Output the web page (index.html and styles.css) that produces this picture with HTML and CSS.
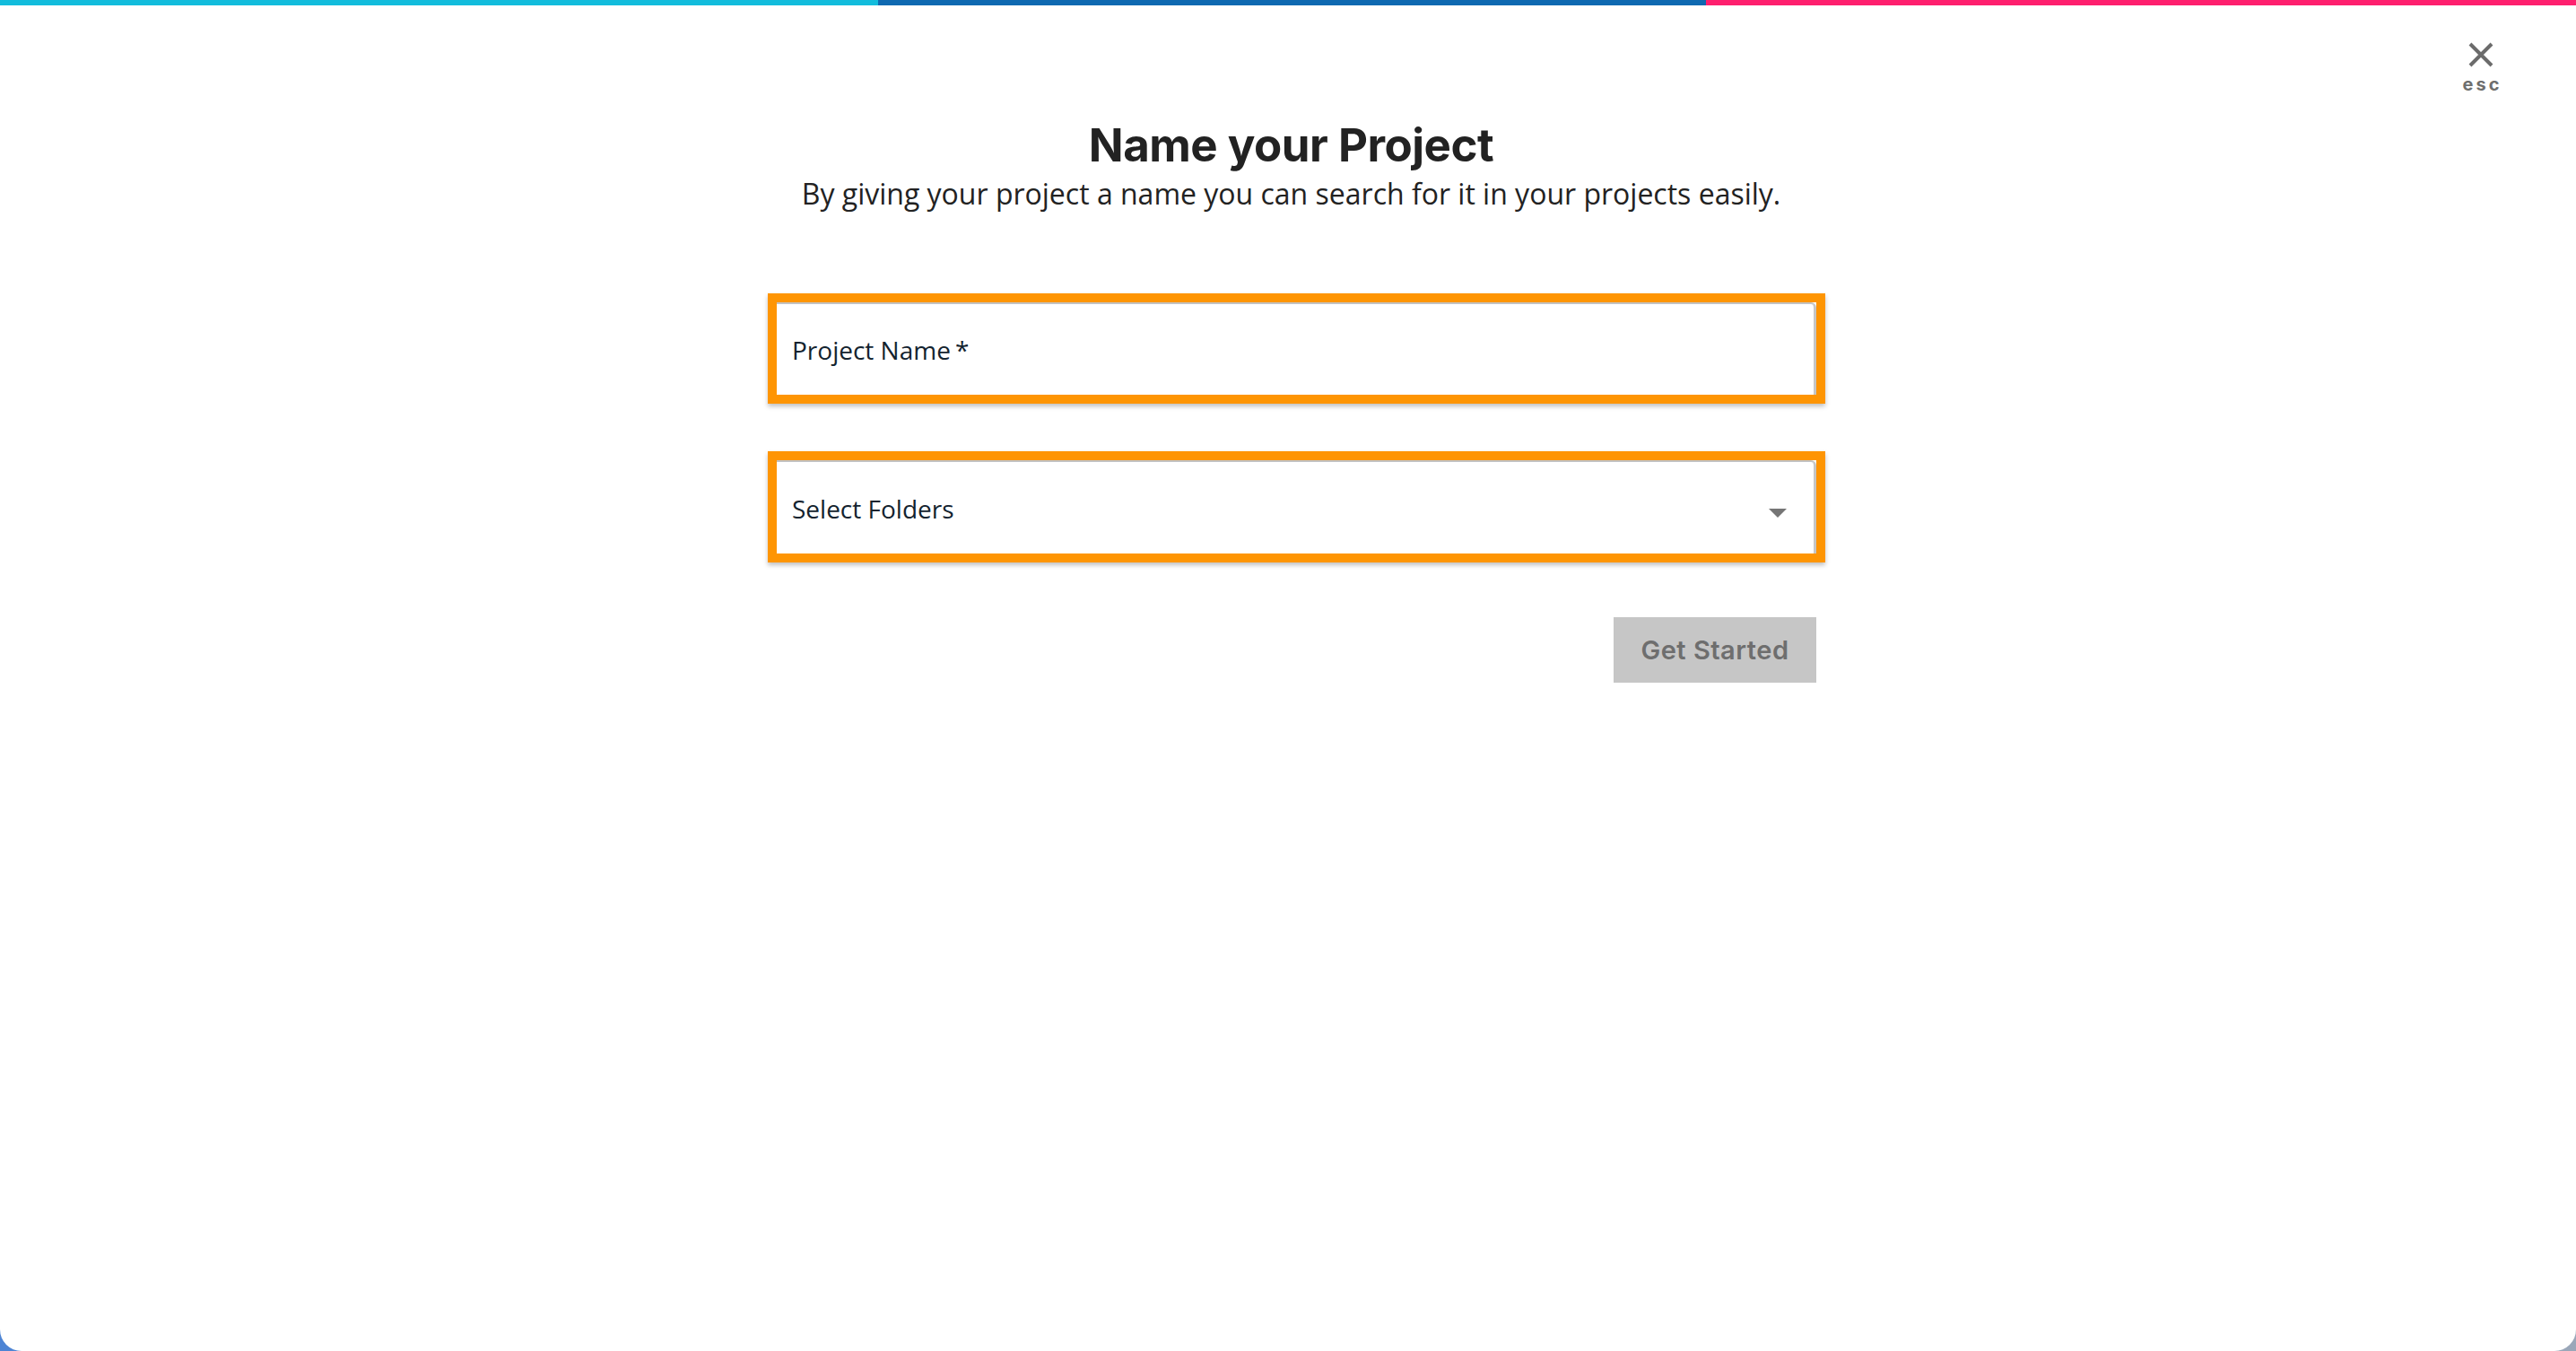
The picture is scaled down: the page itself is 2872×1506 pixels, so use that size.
FILE: index.html
```html
<!DOCTYPE html>
<html lang="en">
<head>
    <meta charset="UTF-8">
    <title>Name your Project</title>
    <link rel="stylesheet" href="styles.css">
</head>
<body>
    <div class="modal">
        <div class="top-bar">
            <span class="cyan"></span>
            <span class="blue"></span>
            <span class="pink"></span>
        </div>
        <div class="close">
            <svg width="28" height="28" viewBox="0 0 28 28">
                <path d="M2 2L26 26M26 2L2 26" stroke="#6b6b6b" stroke-width="4" fill="none"/>
            </svg>
            <span>esc</span>
        </div>

        <div class="header">
            <h1>Name your Project</h1>
            <p>By giving your project a name you can search for it in your projects easily.</p>
        </div>

        <div class="form">
            <div class="field">
                <div class="field-inner">
                    <span class="label">Project Name<span class="req">*</span></span>
                </div>
            </div>
            <div class="field field-select">
                <div class="field-inner">
                    <span class="label">Select Folders</span>
                    <span class="caret"></span>
                </div>
            </div>
            <div class="actions">
                <button class="btn">Get Started</button>
            </div>
        </div>
    </div>
</body>
</html>
```

FILE: styles.css
```css
*{
    margin: 0;
    padding: 0;
    box-sizing: border-box;
}
body{
    background: linear-gradient(90deg, #4d84d4, #9aa7b9);
    font-family: "Open Sans", "Noto Sans", sans-serif;
}
.modal{
    position: relative;
    height: 1506px;
    background: #fff;
    border-radius: 0 0 24px 24px;
    overflow: hidden;
}
.top-bar{
    display: flex;
    height: 6px;
}
.top-bar .cyan{
    width: 979px;
    background: #12bcdc;
}
.top-bar .blue{
    width: 923px;
    background: #0f69b1;
}
.top-bar .pink{
    flex: 1;
    background: #fe1f6e;
}
.close{
    position: absolute;
    top: 47px;
    right: 86px;
    display: flex;
    flex-direction: column;
    align-items: center;
    width: 40px;
    cursor: pointer;
}
.close svg{
    display: block;
}
.close span{
    margin-top: 8px;
    font-family: "Inter", sans-serif;
    font-weight: 700;
    font-size: 20px;
    line-height: 22px;
    letter-spacing: 3px;
    margin-right: -3px;
    color: #6e6e6e;
}
.header{
    text-align: center;
    padding-top: 130px;
    padding-left: 7px;
}
.header h1{
    font-family: "Inter", sans-serif;
    font-weight: 700;
    font-size: 51px;
    line-height: 52px;
    color: #222;
    letter-spacing: -0.5px;
}
.header p{
    margin-top: 8px;
    font-size: 32px;
    line-height: 40px;
    color: #222;
}
.form{
    width: 1159px;
    margin-left: calc(50% - 570px);
    padding-top: 91px;
}
.field{
    margin: 0 -10px;
    height: 123px;
    border: 10px solid #fe9503;
    box-shadow: 0 3px 5px rgba(0, 0, 0, 0.25);
}
.field + .field{
    margin-top: 53px;
    height: 124px;
}
.field-inner{
    display: flex;
    align-items: center;
    height: 100%;
    padding: 0 30px 0 17px;
    border-top: 2px solid #c2c2c2;
    border-right: 3px solid #c6c6c6;
    border-top-right-radius: 6px;
}
.label{
    font-size: 28px;
    color: #13232f;
}
.field-select .label{
    margin-top: 2px;
}
.req{
    margin-left: 5px;
}
.caret{
    margin-left: auto;
    margin-top: 12px;
    border-left: 10px solid transparent;
    border-right: 10px solid transparent;
    border-top: 10px solid #757575;
}
.actions{
    display: flex;
    justify-content: flex-end;
    padding-top: 61px;
}
.btn{
    width: 226px;
    height: 73px;
    border: none;
    background: #c6c6c6;
    color: #6e6e6e;
    font-family: "Inter", sans-serif;
    font-weight: 600;
    font-size: 29px;
    letter-spacing: 0.5px;
}
```
